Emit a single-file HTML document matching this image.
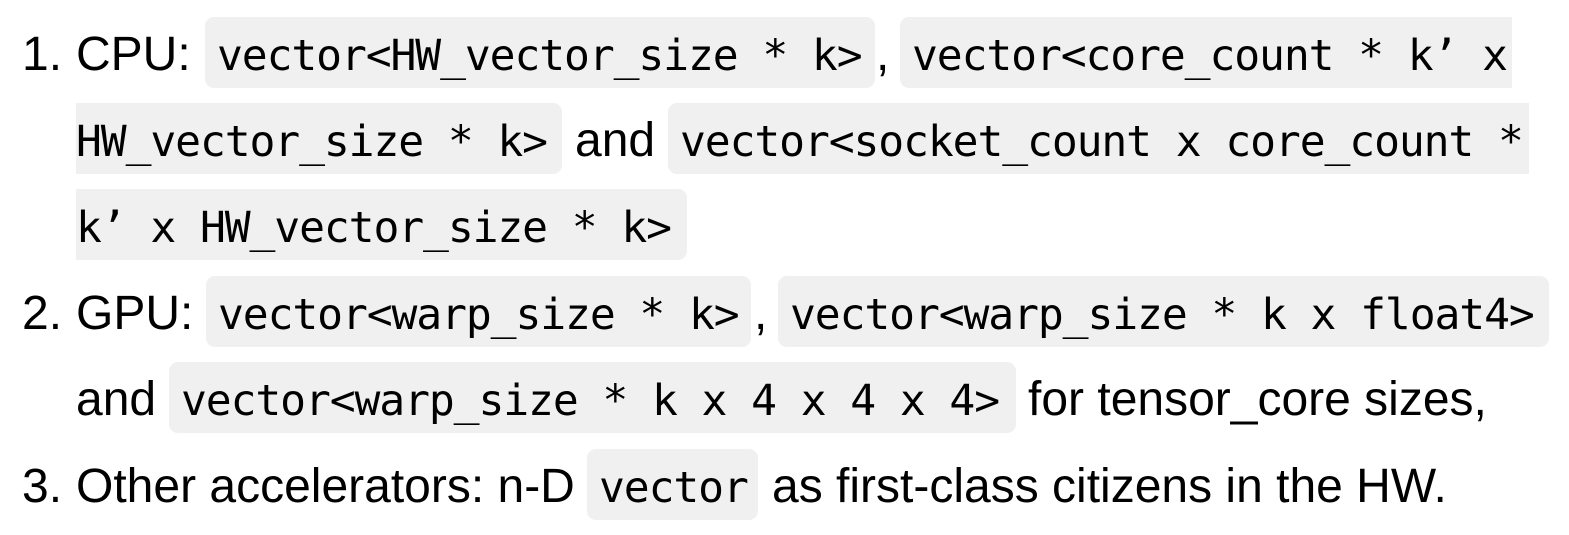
<!DOCTYPE html>
<html><head><style>
body{margin:0;width:1569px;height:535px;background:#fff;position:relative;overflow:hidden;font-family:"Liberation Sans",Arial,sans-serif;color:#000}
.t{position:absolute;font-size:48px;height:71px;line-height:76px;white-space:pre}
.c{position:absolute;height:71px;line-height:79px;background:#f0f0f0;border-radius:9px;font-family:"DejaVu Sans Mono","Liberation Mono",monospace;font-size:43px;letter-spacing:-1.1px;white-space:pre;padding-left:12px;box-sizing:border-box;overflow:hidden}
.nl{border-top-left-radius:0;border-bottom-left-radius:0;padding-left:0}
.nr{border-top-right-radius:0;border-bottom-right-radius:0}
</style></head><body>
<div class="t" style="left:22px;top:17px">1.</div>
<div class="t" style="left:76px;top:17px">CPU:</div>
<div class="c" style="left:205px;top:17px;width:670px">vector&lt;HW_vector_size * k&gt;</div>
<div class="t" style="left:876px;top:17px">,</div>
<div class="c nr" style="left:900px;top:17px;width:612px">vector&lt;core_count * k’ x</div>

<div class="c nl" style="left:76px;top:103px;width:486px">HW_vector_size * k&gt;</div>
<div class="t" style="left:575px;top:103px">and</div>
<div class="c nr" style="left:668px;top:103px;width:861px">vector&lt;socket_count x core_count *</div>

<div class="c nl" style="left:76px;top:189px;width:611px">k’ x HW_vector_size * k&gt;</div>

<div class="t" style="left:22px;top:276px">2.</div>
<div class="t" style="left:76px;top:276px">GPU:</div>
<div class="c" style="left:206px;top:276px;width:545px">vector&lt;warp_size * k&gt;</div>
<div class="t" style="left:754px;top:276px">,</div>
<div class="c" style="left:778px;top:276px;width:771px">vector&lt;warp_size * k x float4&gt;</div>

<div class="t" style="left:76px;top:362px">and</div>
<div class="c" style="left:169px;top:362px;width:847px">vector&lt;warp_size * k x 4 x 4 x 4&gt;</div>
<div class="t" style="left:1028px;top:362px">for tensor_core sizes,</div>

<div class="t" style="left:22px;top:449px">3.</div>
<div class="t" style="left:76px;top:449px">Other accelerators: n-D</div>
<div class="c" style="left:587px;top:449px;width:171px">vector</div>
<div class="t" style="left:772px;top:449px">as first-class citizens in the HW.</div>
</body></html>
